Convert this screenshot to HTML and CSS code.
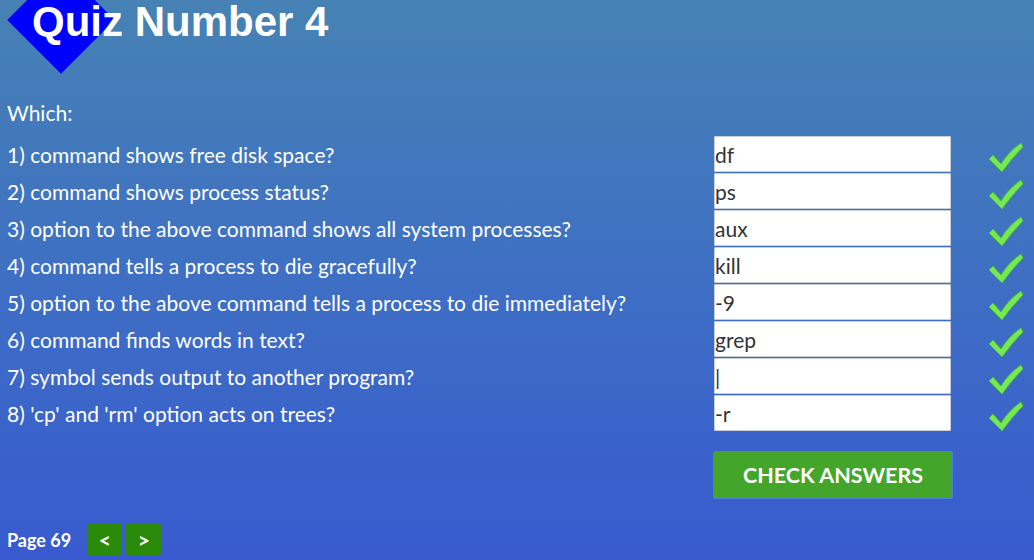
FILE: index.html
```html
<!DOCTYPE html>
<html>
<head>
<meta charset="utf-8">
<link rel="stylesheet" href="styles.css">
</head>
<body>
<header class="header">
  <div class="diamond"></div>
  <h1 class="title">Quiz Number 4</h1>
</header>
<main class="quiz">
  <p class="intro">Which:</p>
  <div class="rows">
    <div class="row"><span class="q">1) command shows free disk space?</span><input class="ans" value="df"><svg class="tick" viewBox="0 0 38 34"><path d="M2 19 L6 15 L14 24 Q22 11 34 3 L36 7 Q25 18 15 32 Z"/></svg></div>
    <div class="row"><span class="q">2) command shows process status?</span><input class="ans" value="ps"><svg class="tick" viewBox="0 0 38 34"><path d="M2 19 L6 15 L14 24 Q22 11 34 3 L36 7 Q25 18 15 32 Z"/></svg></div>
    <div class="row"><span class="q">3) option to the above command shows all system processes?</span><input class="ans" value="aux"><svg class="tick" viewBox="0 0 38 34"><path d="M2 19 L6 15 L14 24 Q22 11 34 3 L36 7 Q25 18 15 32 Z"/></svg></div>
    <div class="row"><span class="q">4) command tells a process to die gracefully?</span><input class="ans" value="kill"><svg class="tick" viewBox="0 0 38 34"><path d="M2 19 L6 15 L14 24 Q22 11 34 3 L36 7 Q25 18 15 32 Z"/></svg></div>
    <div class="row"><span class="q">5) option to the above command tells a process to die immediately?</span><input class="ans" value="-9"><svg class="tick" viewBox="0 0 38 34"><path d="M2 19 L6 15 L14 24 Q22 11 34 3 L36 7 Q25 18 15 32 Z"/></svg></div>
    <div class="row"><span class="q">6) command finds words in text?</span><input class="ans" value="grep"><svg class="tick" viewBox="0 0 38 34"><path d="M2 19 L6 15 L14 24 Q22 11 34 3 L36 7 Q25 18 15 32 Z"/></svg></div>
    <div class="row"><span class="q">7) symbol sends output to another program?</span><input class="ans" value="|"><svg class="tick" viewBox="0 0 38 34"><path d="M2 19 L6 15 L14 24 Q22 11 34 3 L36 7 Q25 18 15 32 Z"/></svg></div>
    <div class="row"><span class="q">8) 'cp' and 'rm' option acts on trees?</span><input class="ans" value="-r"><svg class="tick" viewBox="0 0 38 34"><path d="M2 19 L6 15 L14 24 Q22 11 34 3 L36 7 Q25 18 15 32 Z"/></svg></div>
  </div>
  <div class="actions"><button class="check">CHECK ANSWERS</button></div>
</main>
<footer class="footer">
  <span class="page">Page 69</span>
  <div class="nav">
    <button class="navbtn">&lt;</button>
    <button class="navbtn">&gt;</button>
  </div>
</footer>
</body>
</html>
```
FILE: styles.css
```css
html, body {
  margin: 0;
  height: 100%;
}
body {
  width: 1034px;
  height: 560px;
  overflow: hidden;
  background: linear-gradient(to bottom, #4682b4 0%, #3e6fc4 50%, #385acf 100%);
  font-family: Lato, "Open Sans", sans-serif;
  color: #fff;
  position: relative;
}
.header {
  position: relative;
  height: 90px;
}
.diamond {
  position: absolute;
  left: 23px;
  top: -18px;
  width: 76px;
  height: 76px;
  background: #0000ff;
  transform: rotate(45deg);
}
.title {
  position: relative;
  margin: 0;
  padding: 0 0 0 32px;
  font-family: "Liberation Sans", Arial, sans-serif;
  font-weight: bold;
  font-size: 42px;
  line-height: 44px;
  color: #fff;
}
.quiz {
  padding: 0 0 0 7px;
}
.intro {
  margin: 0;
  font-size: 21px;
  line-height: 46px;
  height: 46px;
}
.rows {
  display: flex;
  flex-direction: column;
  gap: 1px;
}
.row {
  display: flex;
  align-items: center;
  height: 36px;
}
.q {
  width: 707px;
  font-size: 21px;
}
.ans {
  box-sizing: border-box;
  width: 237px;
  height: 36px;
  margin: 0;
  padding: 0;
  border: 1px solid #c8cfdc;
  border-radius: 1px;
  background: #fff;
  font-family: Lato, "Open Sans", sans-serif;
  font-size: 21px;
  color: #333;
  outline: none;
}
.tick {
  width: 38px;
  height: 34px;
  margin-left: 36px;
  margin-top: 6px;
}
.tick path {
  fill: #74ea52;
  stroke: #52b83a;
  stroke-width: 1;
  stroke-linejoin: round;
}
.actions {
  padding: 20px 0 0 706px;
}
.check {
  box-sizing: border-box;
  width: 240px;
  height: 48px;
  background: #43a52a;
  border: 1px solid #4a7fe0;
  border-radius: 2px;
  color: #fff;
  font-family: Lato, "Open Sans", sans-serif;
  font-weight: bold;
  font-size: 21.5px;
  padding: 0;
}
.footer {
  position: absolute;
  left: 7px;
  bottom: 5px;
  display: flex;
  align-items: center;
  gap: 16px;
}
.page {
  font-weight: bold;
  font-size: 18px;
}
.nav {
  display: flex;
  gap: 4px;
}
.navbtn {
  width: 35px;
  height: 31px;
  padding: 0;
  background: #2a8a0a;
  border: none;
  border-radius: 2px;
  color: #fff;
  font-family: Lato, "Open Sans", sans-serif;
  font-weight: bold;
  font-size: 21px;
}
```
